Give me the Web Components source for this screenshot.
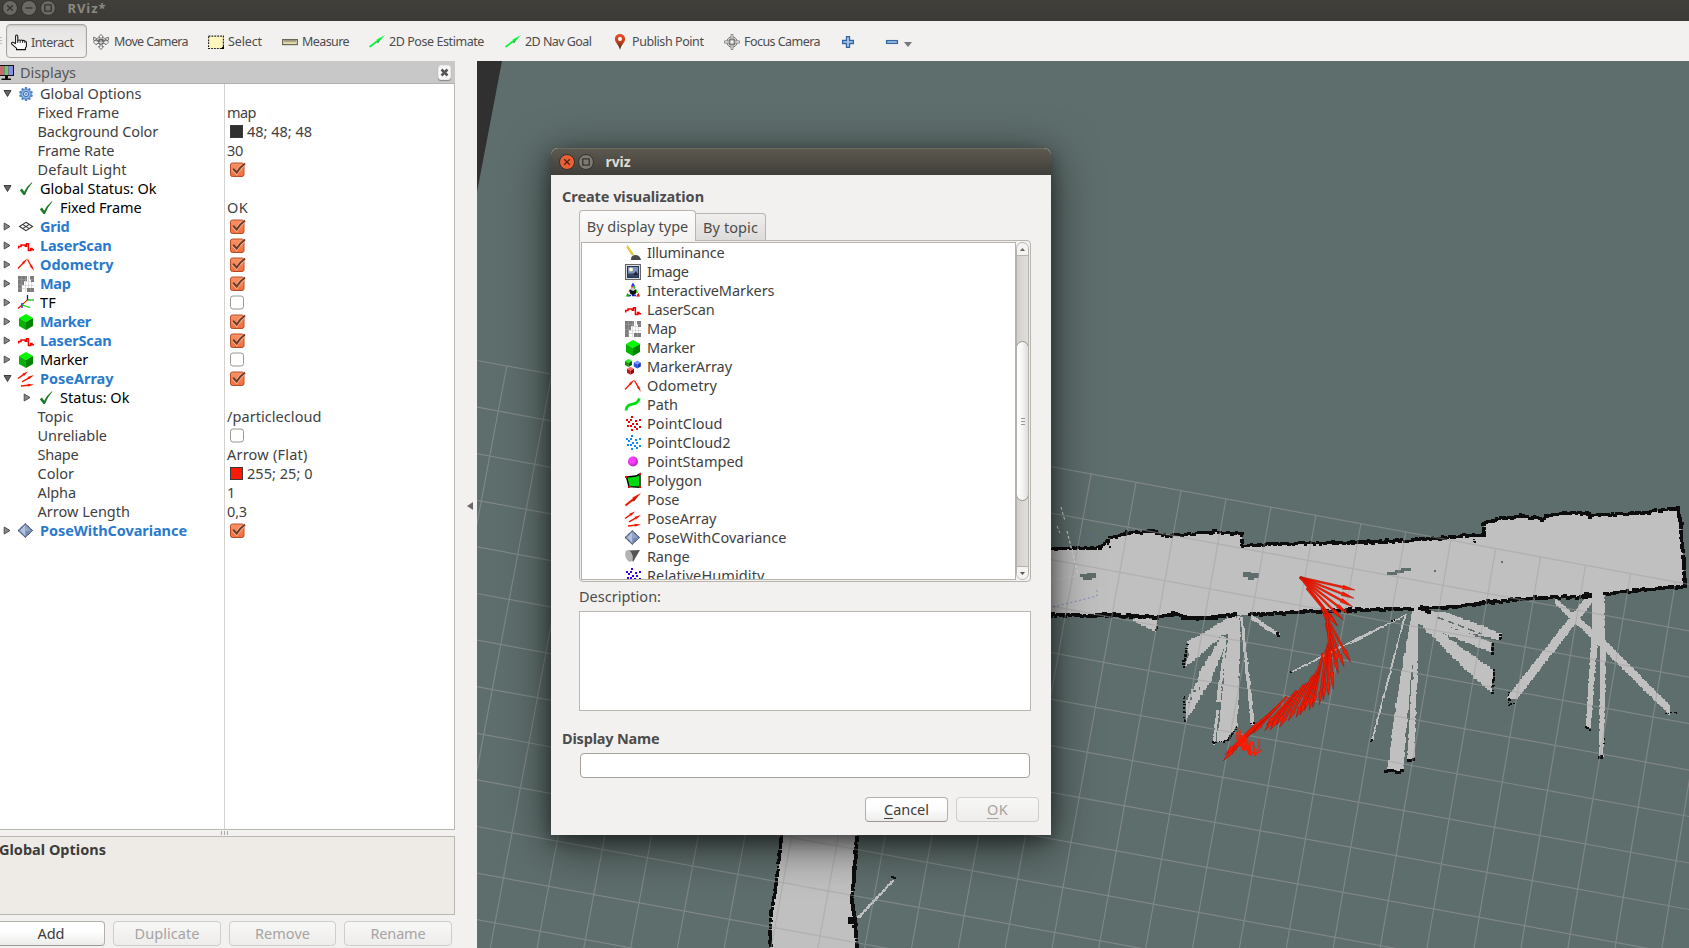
<!DOCTYPE html>
<html lang="en">
<head>
<meta charset="utf-8">
<title>RViz</title>
<style>
html,body{margin:0;width:100%;height:100%;overflow:hidden;background:#f2f1f0}
body{font-family:"Noto Sans","Open Sans",sans-serif;font-size:14.5px;color:#4c4c4c}
</style>
</head>
<body>
<rviz-app></rviz-app>
<script>
const define = (name, css, html, init) => {
  const t = document.createElement('template');
  t.innerHTML = `<style>*{box-sizing:border-box}${css}</style>${html}`;
  customElements.define(name, class extends HTMLElement {
    connectedCallback() {
      if (this.shadowRoot) return;
      const r = this.attachShadow({mode: 'open'});
      const c = t.content.cloneNode(true);
      if (init) init.call(this, c);
      r.appendChild(c);
    }
  });
};

/* ---------- icons, 16 x 16 grid ---------- */
const arrow = (x1, y1, x2, y2, w, c) => {
  const d = Math.hypot(x2 - x1, y2 - y1), ux = (x2 - x1) / d, uy = (y2 - y1) / d, px = -uy, py = ux;
  const at = (t, o) => `${(x1 + ux * d * t + px * o).toFixed(2)},${(y1 + uy * d * t + py * o).toFixed(2)}`;
  return `<polygon fill="${c}" points="${at(0, w * .5)} ${at(.55, w * .5)} ${at(.5, w)} ${at(1, 0)} ${at(.5, -w)} ${at(.55, -w * .5)} ${at(0, -w * .5)}"/>`;
};
const cube = (x, y, s, a, b, c) => `<g transform="translate(${x} ${y}) scale(${s})"><path d="M7 0 14 4 7 8 0 4Z" fill="${a}"/><path d="M0 4 7 8V16L0 12Z" fill="${b}"/><path d="M14 4 7 8V16L14 12Z" fill="${c}"/></g>`;
const dots = c => `<g fill="${c}" shape-rendering="crispEdges">${[[6,0],[1,3],[5,3],[10,4],[14,3],[3,5],[7,7],[11,7],[2,9],[5,9],[9,10],[14,10],[6,13],[11,12]].map(p => `<rect x="${p[0]}" y="${p[1]}" width="2" height="2"/>`).join('')}</g>`;
const gearTeeth = Array.from({length: 10}, (_, i) => `<rect x="6.8" y="1.1" width="2.4" height="3" rx=".6" transform="rotate(${i * 36} 8 8)"/>`).join('');
const ICONS = {
  hand: '<path d="M4.600 9.500V2.600Q4.600 1 5.700 1 6.800 1 6.800 2.600V6.500Q8 5.400 9.200 6.400 10.600 5.600 11.600 6.700 13 6 13.800 7 15.400 7 15.400 8.600V12.500L14.400 14V15.600H5.500V14.200L.8 10.200Q0 8.500 1.600 8.300 3 8.200 4.600 10" fill="#fff" stroke="#111" stroke-width="1.050"/><path d="M6.800 6.500V9M9.200 6.600V9M11.600 6.900V9M13.800 7.200V9" stroke="#111" stroke-width=".9" fill="none"/>',
  move: '<g fill="#f5f5f5" stroke="#555" stroke-width=".8"><path d="M8 .4 10.600 3.400H9V6.600H12L12.600 5 15.600 8 12.600 11 12 9.400H9V12.600H10.600L8 15.600 5.400 12.600H7V9.400H4L3.400 11 .4 8 3.400 5 4 6.600H7V3.400H5.400Z"/><path d="M.6 3.200 4 4.600 8 6 12 4.600 15.400 3.200V6.200L12 7 8 8 4 7 .6 6.200Z" fill="none"/><circle cx="8" cy="8" r="2.400" fill="none"/></g>',
  select: '<rect x=".6" y="2.100" width="14.800" height="12.400" fill="#fff7bb" stroke="#222" stroke-width="1.200" stroke-dasharray="1.800 1.100"/><path d="M16 11.500V15H12.500Z" fill="#000"/>',
  measure: '<rect x=".6" y="5.600" width="14.800" height="5" fill="#e6dcae" stroke="#6c6858" stroke-width="1.200"/><path d="M3 6V8.200M5 6V8.200M7 6V8.200M9 6V8.200M11 6V8.200M13 6V8.200" stroke="#555" stroke-width=".8"/>',
  green: arrow(.6, 13, 15.800, 1.200, 1.800, '#0bf43a') + '<path d="M7.500 9 10.500 6.300 9.800 8.600Z" fill="#128a2a"/>',
  pin: '<defs><linearGradient id="p" x1="0" y1="0" x2="0" y2="1"><stop offset="0" stop-color="#e8502a"/><stop offset=".45" stop-color="#c4441f"/><stop offset="1" stop-color="#3a2a18"/></linearGradient></defs><path d="M8 0C4.600 0 2.900 2.500 2.900 5.100 2.900 8.600 6.600 10.500 8 16 9.400 10.500 13.100 8.600 13.100 5.100 13.100 2.500 11.400 0 8 0Z" fill="url(#p)"/><circle cx="8" cy="5" r="2" fill="#fff"/>',
  focus: '<g fill="none" stroke="#777" stroke-width="1"><circle cx="8" cy="8" r="5.200"/><circle cx="8" cy="8" r="3"/><path d="M7 .5H9V6.900H15.500V9.100H9V15.500H7V9.100H.5V6.900H7Z" fill="#eee" stroke-width=".8"/><path d="M5 5.300H11M5 10.700H11M5.300 5V11M10.700 5V11"/></g>',
  plus: '<path d="M6.500 2.600H9.500V6.500H13.400V9.500H9.500V13.400H6.500V9.500H2.600V6.500H6.500Z" fill="#aecbea" stroke="#3465a4" stroke-width="1.300"/>',
  minus: '<rect x="2.600" y="6.600" width="10.800" height="2.800" fill="#aecbea" stroke="#3465a4" stroke-width="1.300"/>',
  monitor: '<rect x="-1" y="1" width="15" height="11" fill="#111"/><rect x="0" y="2" width="4.300" height="9" fill="#c66a6a"/><rect x="4.300" y="2" width="4.300" height="9" fill="#74c27a"/><rect x="8.600" y="2" width="4.400" height="9" fill="#8a8ae6"/><path d="M5 12H8V14.500H11V16H1.500V14.500H5Z" fill="#111"/>',
  gear: `<g fill="#4f84c4">${gearTeeth}<circle cx="8" cy="8" r="5.500"/></g><circle cx="8" cy="8" r="4.500" fill="#8fb5e2"/><circle cx="8" cy="8" r="2.600" fill="#c9dcf2" stroke="#3c6fb0" stroke-width="1"/><circle cx="8" cy="8" r="1" fill="#4f84c4"/>`,
  ok: '<path d="M1.800 9.200 4 7.600 6.200 10.800Q9 5 13.800 1.200L14.300 1.800Q9.500 7 7 14H5.500Z" fill="#1e7a28"/>',
  grid: '<g fill="none" stroke="#333" stroke-width="1.100"><path d="M8 3.300 14.500 7.500 8 11.700 1.500 7.500Z"/><path d="M4.700 5.400 11.300 9.600M11.300 5.400 4.700 9.600"/></g>',
  laser: '<path d="M.7 10.500V8.400H3V7H7.300V8.200H8.500V5.800H10.400V12.600H12.600V10.400H14V11.800H16" fill="none" stroke="#f80000" stroke-width="1.500"/>',
  odom: arrow(0, 11.500, 9.500, 1.500, 1.300, '#f01800') + arrow(9.500, 2.500, 16, 14, 1.300, '#f01800'),
  map: '<g shape-rendering="crispEdges"><rect width="16" height="16" fill="#fff"/><path d="M4 5H16M4 9H16M4 12H16M7 5V16M10 0V16M13 5V13" stroke="#ddd" fill="none"/><path d="M0 0H9V5H6V9H4V16H0ZM12 0H16V6H13ZM9 12H16V16H9Z" fill="#7c7c7c"/><path d="M3.500 0V16M7.500 0V5M0 3.500H9M0 8H5M0 12H4M12 3H16M12 12V16" stroke="#989898" stroke-width=".7" fill="none"/></g>',
  tf: '<g fill="none" stroke-width="1.300"><path d="M10 5H16" stroke="#0c0"/><path d="M9.500 5V0" stroke="#11d"/><path d="M9.500 5 4 10" stroke="#d11" stroke-dasharray="3 .5"/><path d="M4 8V13" stroke="#11d"/><path d="M4 10 0 13.500" stroke="#d11"/><path d="M4 10 12 12.500" stroke="#0c0"/><path d="M6 9 9 6" stroke="#dd2" stroke-width=".8"/></g>',
  marker: cube(1, 0, 1, '#00f800', '#00b400', '#008400'),
  markers: cube(0, 0, .5, '#2e2', '#090', '#060') + cube(8.800, 1.600, .5, '#7a9cff', '#2a52dd', '#1a37a8') + cube(2, 7.800, .5, '#f66', '#c01818', '#900'),
  path: '<path d="M1 13.500C1.500 6 8 8 11 6 13 5 13.500 3 14.500 1.500" fill="none" stroke="#00dc14" stroke-width="2.800"/>',
  pcr: dots('#f00000'), pcb: dots('#0c8cff'), pcv: dots('#3a00f0'),
  point: '<defs><radialGradient id="r" cx=".4" cy=".4"><stop offset=".5" stop-color="#ff3cff"/><stop offset="1" stop-color="#c02cc8"/></radialGradient></defs><circle cx="8" cy="7.500" r="5" fill="url(#r)"/>',
  polygon: '<path d="M1.500 4 11 3 15 .8V14.200L4 13.600Z" fill="#00d810" stroke="#000" stroke-width="1.400"/><path d="M0 3H2V5H0ZM14 0H16V2H14ZM14 13H16V15H14ZM3 13H5V15H3Z" fill="#f00"/>',
  pose: arrow(.5, 13.500, 16, 1, 2, '#f01800') + '<path d="M7 9.500 11 5.500 9.500 9Z" fill="#9a1408"/>',
  posearray: arrow(0, 7.500, 10, .5, 1.500, '#f01800') + arrow(4, 10.800, 16, 4, 1.500, '#f01800') + arrow(3, 15, 16, 13.500, 1.500, '#f01800'),
  cov: '<path d="M7.300 .6 14.600 7.500 7.300 14.400 0 7.500Z" fill="#7389b3" stroke="#2b3a5c" stroke-width="1" stroke-dasharray="1.400 .5"/><path d="M7.300 2V13L2 7.500Z" fill="#b4c2dc"/><path d="M7.300 2 12.500 7.500 7.300 8.500Z" fill="#93a6c8"/>',
  range: '<path d="M3 1.500 15 1 8 13Z" fill="#555"/><ellipse cx="4" cy="7" rx="3.600" ry="6" transform="rotate(-18 4 7)" fill="#b4b4b4"/>',
  illum: '<path d="M2.500 .5 8.500 9.500 7 10 2 2.500Z" fill="#ffd820" stroke="#c9a200" stroke-width=".6"/><path d="M6 15Q5.500 10 11 10 15 10.300 16 15Z" fill="#4a4a4a"/>',
  image: '<rect x=".6" y=".6" width="14.800" height="14.800" fill="#fff" stroke="#666" stroke-width="1.200"/><rect x="2.500" y="2.500" width="11" height="11" fill="#7b93b8" stroke="#223354" stroke-width="1"/><rect x="3" y="9.500" width="10" height="3.500" fill="#364866"/><circle cx="6" cy="5.600" r="2" fill="#fffbd0"/><path d="M8 11 11 7 13 11Z" fill="#223"/>',
  imark: '<g fill="none" stroke-width="1.600"><path d="M8 2 2.500 12" stroke="#e22" stroke-dasharray="3 2"/><path d="M8 2 13.500 12" stroke="#2b2" stroke-dasharray="4 1"/><path d="M2 12.500H14" stroke="#22e" stroke-dasharray="4 1"/></g><path d="M8 -.5 10 3H6Z" fill="#33e"/><path d="M1 13.500H5L2.500 10Z" fill="#0b0"/><path d="M15 13.500H11L13.500 10Z" fill="#e11"/><path d="M8 4.500 11 6.500V10.500L8 12.500 5 10.500V6.500Z" fill="#111"/><path d="M8 4.500 11 6.500 8 8 5 6.500Z" fill="#ccc"/>',
  on: '<defs><linearGradient id="o" x1="0" y1="0" x2="0" y2="1"><stop offset="0" stop-color="#fb9468"/><stop offset="1" stop-color="#ee6d3c"/></linearGradient></defs><rect x=".5" y="1" width="13.500" height="13.500" rx="2" fill="url(#o)" stroke="#b54e27"/><path d="M3.200 7.100 6.600 10.800Q9.500 5.500 14.600 2.300" fill="none" stroke="#f9b79a" stroke-width="3.400"/><path d="M3.200 6.700 6.700 10.500Q9.500 5.500 15 1.500" fill="none" stroke="#6e3a26" stroke-width="2"/>',
  off: '<rect x=".5" y="1" width="13" height="13" rx="2.500" fill="#fff" stroke="#9b9892"/>',
  open: '<path d="M4 4.500H11L7.500 10.500Z" fill="#666" stroke="#333" stroke-width=".9"/>',
  shut: '<path d="M4.200 4V11L10 7.500Z" fill="#888" stroke="#444" stroke-width=".9"/>'
};
define('rv-icon', ':host{display:block;width:16px;height:16px;flex:none}svg{display:block;overflow:visible}', '<svg width="16" height="16" viewBox="0 0 16 16"></svg>', function (c) {
  c.querySelector('svg').innerHTML = ICONS[this.getAttribute('name')] || '';
});

/* A single line of text set to a fixed advance width. */
customElements.define('ui-text', class extends HTMLElement {
  connectedCallback() {
    if (this.shadowRoot) return;
    this.attachShadow({mode: 'open'}).innerHTML = '<style>:host{display:inline-block;white-space:pre;flex:none}::slotted(u){text-underline-offset:3px;text-decoration-thickness:1px}</style><slot></slot>';
    const w = +this.getAttribute('w'), n = this.textContent.length;
    if (w && n > 1) {
      const d = (w - this.getBoundingClientRect().width) / n;
      this.style.letterSpacing = Math.max(-1.2, Math.min(1.2, d)).toFixed(3) + 'px';
    }
  }
});
const T = (s, w) => `<ui-text w="${w}">${s}</ui-text>`;

/* ---------- window chrome ---------- */
define('window-button', `:host{display:block;width:16px;height:16px;flex:none}
svg{display:block}`, '<svg width="16" height="16" viewBox="0 0 16 16"><circle cx="8" cy="8" r="7.500"/><path fill="none"/></svg>', function (c) {
  const k = this.getAttribute('kind'), live = this.hasAttribute('live');
  const ci = c.querySelector('circle'), p = c.querySelector('path');
  ci.setAttribute('fill', live ? (k === 'close' ? '#ec6034' : '#7c7a72') : '#6b6963');
  ci.setAttribute('stroke', '#33322e');
  p.setAttribute('stroke', live && k === 'close' ? '#4e2012' : '#35342f');
  p.setAttribute('stroke-width', '1.300');
  p.setAttribute('d', {close: 'M5.200 5.200 10.800 10.800M10.800 5.200 5.200 10.800', min: 'M4.500 8H11.500', max: 'M4.800 4.800H11.200V11.200H4.800Z'}[k]);
});
define('main-title', `:host{display:flex;height:21px;background:linear-gradient(#403f3a,#3c3b37);align-items:flex-start;padding:0 0 0 1.500px;color:#8b887e;font:bold 13px/16px "Noto Sans",sans-serif}
window-button{margin-right:3px}ui-text{margin-left:9px}`,
`<window-button kind="close"></window-button><window-button kind="min"></window-button><window-button kind="max"></window-button>${T('RViz*', 39)}`);

define('tool-button', `:host{display:flex;flex:none;align-items:center;gap:5px;height:34px;padding-top:1px}
:host([active]){border:1px solid #a9a6a0;border-radius:4px;background:linear-gradient(#e4e3e1,#f2f1f0);box-shadow:inset 0 1px 2px #0002;padding:2px 0 0 4px;gap:4px}`, '<slot></slot>');
define('rv-toolbar', `:host{display:flex;height:40px;align-items:flex-start;padding-top:3px;background:#f2f1f0;font-size:12.500px;color:#4c4c4c}
.grip{width:2px;height:9px;margin:13px 4px 0 0;background:repeating-linear-gradient(#bbb 0 1px,transparent 1px 3px)}
.dd{margin:18px 0 0 4px;border:4px solid transparent;border-top:5px solid #777;height:0}`,
`<span class="grip"></span>
<tool-button active style="width:81px;margin-right:6px"><rv-icon name="hand"></rv-icon>${T('Interact', 42.5)}</tool-button>
<tool-button style="width:115px"><rv-icon name="move"></rv-icon>${T('Move Camera', 74)}</tool-button>
<tool-button style="width:74px;gap:4px"><rv-icon name="select"></rv-icon>${T('Select', 34)}</tool-button>
<tool-button style="width:87px;gap:4px"><rv-icon name="measure"></rv-icon>${T('Measure', 47)}</tool-button>
<tool-button style="width:136px;gap:4px"><rv-icon name="green"></rv-icon>${T('2D Pose Estimate', 95)}</tool-button>
<tool-button style="width:107px;gap:4px"><rv-icon name="green"></rv-icon>${T('2D Nav Goal', 66.5)}</tool-button>
<tool-button style="width:112px;gap:4px"><rv-icon name="pin"></rv-icon>${T('Publish Point', 71.5)}</tool-button>
<tool-button style="width:116px;gap:4px"><rv-icon name="focus"></rv-icon>${T('Focus Camera', 76)}</tool-button>
<tool-button style="width:44px"><rv-icon name="plus"></rv-icon></tool-button>
<tool-button><rv-icon name="minus"></rv-icon></tool-button><span class="dd"></span>`);

/* ---------- displays panel ---------- */
define('push-button', `:host{display:flex;flex:none;height:25px;align-items:center;justify-content:center;border:1px solid #b3b0a9;border-bottom-color:#9d9a94;border-radius:4px;background:linear-gradient(#fff,#fdfdfd 45%,#ececeb);color:#3c3c3c;padding-bottom:1px}
:host([disabled]){color:#a6a4a1;border-color:#cfcdc9;background:linear-gradient(#f7f7f6,#eeedec)}`, '<slot></slot>');

/* depth, arrow, icon, style, label, width, value, value width, swatch */
const ROWS = [
  [0, 'open', 'gear', '', 'Global Options', 101.5],
  [2, '', '', '', 'Fixed Frame', 81.5, 'map', 29],
  [2, '', '', '', 'Background Color', 120.5, '48; 48; 48', 65, '#303030'],
  [2, '', '', '', 'Frame Rate', 77, '30', 16],
  [2, '', '', '', 'Default Light', 89, '+'],
  [0, 'open', 'ok', 'k', 'Global Status: Ok', 116.5],
  [1, '', 'ok', 'k', 'Fixed Frame', 81.5, 'OK', 21],
  [0, 'shut', 'grid', 'b', 'Grid', 29.5, '+'],
  [0, 'shut', 'laser', 'b', 'LaserScan', 71.5, '+'],
  [0, 'shut', 'odom', 'b', 'Odometry', 73.5, '+'],
  [0, 'shut', 'map', 'b', 'Map', 30.5, '+'],
  [0, 'shut', 'tf', 'k', 'TF', 16, '-'],
  [0, 'shut', 'marker', 'b', 'Marker', 51, '+'],
  [0, 'shut', 'laser', 'b', 'LaserScan', 71.5, '+'],
  [0, 'shut', 'marker', 'k', 'Marker', 48, '-'],
  [0, 'open', 'posearray', 'b', 'PoseArray', 73.5, '+'],
  [1, 'shut', 'ok', 'k', 'Status: Ok', 69.5],
  [2, '', '', '', 'Topic', 36, '/particlecloud', 94.5],
  [2, '', '', '', 'Unreliable', 69.5, '-'],
  [2, '', '', '', 'Shape', 41, 'Arrow (Flat)', 80.5],
  [2, '', '', '', 'Color', 36.5, '255; 25; 0', 65.5, '#ff1900'],
  [2, '', '', '', 'Alpha', 38.5, '1', 0],
  [2, '', '', '', 'Arrow Length', 92.5, '0,3', 20],
  [0, 'shut', 'cov', 'b', 'PoseWithCovariance', 147, '+']
];
define('display-tree', `:host{display:block;flex:1;background:linear-gradient(90deg,#fff 224px,#d4d3d1 224px,#d4d3d1 225px,#fff 225px);border-right:1px solid #b9b7b2;border-bottom:1px solid #b9b7b2;color:#3f3f3f;line-height:19px}
.row{display:grid;grid-template-columns:225px 1fr;height:19px}
.n,.v{display:flex;align-items:center}
.d1{padding-left:20px}.d2{padding-left:37.500px}
.n rv-icon:first-child,.n i{width:16px;margin-right:1.500px}.n rv-icon+rv-icon,.n i+rv-icon{margin-right:6.500px}
.b{color:#2a7acc;font-weight:bold}.k{color:#000}
.v{padding-left:2px}.v rv-icon{margin-left:3px}
.sw{width:13px;height:13px;border:1px solid #3a3a3a;margin:0 4px 0 3px}`, '<div id="l"></div>', function (c) {
  c.querySelector('#l').innerHTML = ROWS.map(([d, a, ic, st, lab, w, v, vw, sw]) =>
    `<div class="row"><div class="n d${d} ${st}">${d < 2 ? (a ? `<rv-icon name="${a}"></rv-icon>` : '<i></i>') + `<rv-icon name="${ic}"></rv-icon>` : ''}${T(lab, w)}</div><div class="v">${v === '+' ? '<rv-icon name="on"></rv-icon>' : v === '-' ? '<rv-icon name="off"></rv-icon>' : v ? (sw ? `<span class="sw" style="background:${sw}"></span>` : '') + T(v, vw) : ''}</div></div>`).join('');
});
define('displays-panel', `:host{display:flex;flex-direction:column;width:455px;flex:none}
header{display:flex;height:23px;background:#c8c8c8;border-bottom:1px solid #b4b2ae;align-items:center;color:#555}
header ui-text{margin-left:4px}header b{flex:1}
.x{width:13px;height:15px;border-radius:3px;background:#f8f8f7;border:1px solid #e8e8e8;box-shadow:0 1px 1px #0005;margin-right:4px}
.x svg{display:block}
.grip{height:6px;display:flex;justify-content:center;align-items:center;gap:2px;padding-right:6px}
.grip i{width:1px;height:4px;background:#aaa}
.desc{height:79px;border:1px solid #b9b7ae;border-left:0;background:#eeebe6;font-weight:bold;color:#3c3c3c;padding-top:2px}
.desc ui-text{margin-left:-1px}
nav{display:flex;height:33px;padding:6px 0 0;color:#444}
nav push-button+push-button{margin-left:8px}`,
`<header><rv-icon name="monitor"></rv-icon>${T('Displays', 56)}<b></b><span class="x"><svg width="11" height="13" viewBox="0 0 11 13"><path d="M2.500 3.500 8.500 9.500M8.500 3.500 2.500 9.500" stroke="#555" stroke-width="2.600"/></svg></span></header>
<display-tree></display-tree>
<div class="grip"><i></i><i></i><i></i></div>
<div class="desc">${T('Global Options', 107)}</div>
<nav><push-button style="width:108px;margin-left:-3px">${T('Add', 27)}</push-button><push-button disabled style="width:108px">${T('Duplicate', 65)}</push-button><push-button disabled style="width:107px">${T('Remove', 55)}</push-button><push-button disabled style="width:108px">${T('Rename', 55)}</push-button></nav>`);

/* ---------- 3D view ---------- */
let seed = 7;
const rnd = () => (seed = (seed * 16807) % 2147483647) / 2147483647;
const A = (x, y) => [1040 + x / 3, 480 + y / 3];
const B = (x, y) => [1350 + x / 3, 480 + y / 3];
const pts = l => l.map(p => p.map(n => n.toFixed(1)).join()).join(' ');
const wall = (l, t = 3) => {
  let d = '';
  for (let i = 1; i < l.length; i++) {
    const [x1, y1] = l[i - 1], [x2, y2] = l[i], n = Math.max(1, Math.round(Math.hypot(x2 - x1, y2 - y1) / 2.4));
    for (let k = 0; k <= n; k++) {
      const w = Math.round(t - .4 + rnd() * 1.8), h = Math.round(t - .9 + rnd() * 1.6);
      d += `M${Math.round(x1 + (x2 - x1) * k / n - w / 2 + rnd() - .5)} ${Math.round(y1 + (y2 - y1) * k / n - h / 2 + rnd() * 2.2 - 1.1)}h${w}v${h}h${-w}z`;
    }
  }
  return `<path d="${d}" fill="#0d0d0d"/>`;
};
/* known-free area whose outline follows the cells of the map */
const cells = (l, fill = '#c0c0c0') => {
  let d = '';
  l.forEach(([x1, y1], i) => {
    const [x2, y2] = l[(i + 1) % l.length], n = Math.max(1, Math.round(Math.hypot(x2 - x1, y2 - y1) / 3));
    for (let k = 0; k < n; k++) {
      const x = Math.round(x1 + (x2 - x1) * k / n + (rnd() - .5) * 1.6), y = Math.round(y1 + (y2 - y1) * k / n + (rnd() - .5) * 1.6);
      d += d ? `H${x}V${y}` : `M${x} ${y}`;
    }
  });
  return `<path d="${d}Z" fill="${fill}"/>`;
};
/* thin free-space beam with a stepped, sensor-like edge */
const beam = (x1, y1, x2, y2, w1, w2) => {
  const L = Math.hypot(x2 - x1, y2 - y1), n = Math.ceil(L / 2);
  let d = '';
  const vert = Math.abs(y2 - y1) > Math.abs(x2 - x1);
  for (let k = 0; k <= n; k++) {
    const t = k / n, w = w1 + (w2 - w1) * t + (rnd() - .3) * 1.6, x = x1 + (x2 - x1) * t, y = y1 + (y2 - y1) * t;
    const r = Math.max(1, Math.round(w));
    d += vert ? `M${Math.round(x - w / 2)} ${Math.round(y)}h${r}v2h${-r}z` : `M${Math.round(x)} ${Math.round(y - w / 2)}v${r}h2v${-r}z`;
  }
  return `<path d="${d}" fill="#c0c0c0"/>`;
};
function scene() {
  let s = '';
  const topA = [[33,205],[180,203],[215,170],[260,160],[340,153],[380,168],[440,165],[520,155],[605,162],[607,197],[690,192],[1020,186]].map(p => A(...p));
  const topB = [[0,188],[220,178],[400,163],[402,130],[440,117],[520,108],[575,118],[600,103],[710,99],[720,108],[860,100],[985,85],[992,130],[1000,240],[1005,318]].map(p => B(...p));
  const b1 = [[1005,318],[860,332],[765,344]].map(p => B(...p));
  const b2 = [[722,352],[560,353],[400,368],[330,380],[210,386]].map(p => B(...p));
  const b3 = [B(185, 386), B(0, 390), A(840, 395), A(690, 400), A(628, 404)];
  const b4 = [[585,404],[520,412],[450,415],[400,402],[350,412],[215,406],[33,406]].map(p => A(...p));
  s += `<polygon points="477,61 502,61 477,192" fill="#303030" shape-rendering="auto"/>`;
  s += `<polygon fill="#c0c0c0" points="${pts([...topA, ...topB, ...b1, ...b2, ...b3, ...b4])}"/>`;
  /* first doorway */
  s += cells([A(585,400),A(540,430),A(440,490),A(446,530),A(436,560),A(545,466),A(600,455)]);
  s += cells([A(542,468),A(565,480),A(515,600),A(440,722),A(436,668),A(480,575)]);
  s += cells([A(566,420),A(600,405),A(600,480),A(598,560),A(592,740),A(560,785),A(530,788),A(545,640),A(562,480)]);
  s += beam(...A(556, 490), ...A(535, 660), 2, 4) + beam(...A(533, 690), ...A(521, 790), 2, 2) + beam(...A(605, 410), ...A(638, 728), 2, 4) + beam(...A(632, 412), ...A(715, 466), 5, 3);
  s += cells([A(270,415),A(354,415),A(350,455)]) + wall([A(354, 412), A(349, 452)], 1.3);
  s += `<path d="M1196 680h2v2h-2zM1199 687h1v3h-1zM1193 690h3v2h-3zM1190 697h2v3h-2zM1188 702h2v1h-2z" fill="#5e6e6c"/>`;
  s += wall([A(442, 497), A(430, 560)], 2) + wall([A(432, 650), A(434, 724)], 1.500) + wall([A(530, 790), A(565, 780), A(590, 740)], 1.500) + wall([A(712, 462), A(716, 472)], 2) + wall([A(635, 730), A(644, 731)], 2) + wall([A(518, 790), A(521, 790)], 1.500);
  /* second doorway */
  s += beam(...B(165, 405), ...B(0, 490), 1.300, 1.300) + beam(...A(1020, 440), ...A(755, 575), 1.300, 1.600);
  s += beam(...B(165, 405), ...B(66, 780), 1.300, 1.600);
  s += cells([B(187,388),B(206,388),B(203,470),B(182,600),B(160,870),B(112,870),B(140,650)]);
  s += beam(...B(198, 400), ...B(196, 620), 4, 4) + beam(...B(193, 600), ...B(182, 838), 5, 7);
  s += cells([B(200,390),B(280,395),B(400,440),B(455,465),B(448,480),B(270,435),B(340,455),B(425,490),B(424,516),B(265,452),B(340,510),B(428,570),B(426,636),B(350,570),B(205,425)]);
  s += `<path d="M${B(262,412)}L${B(395,462)}" fill="none" stroke="#5e6e6c" stroke-width="1.500" stroke-dasharray="7 4"/>`;
  s += wall([B(452, 467), B(450, 480)], 2) + wall([B(430, 490), B(427, 518)], 2) + wall([B(432, 572), B(427, 636)], 2) + wall([B(110, 873), B(155, 875)], 3) + wall([B(172, 842), B(190, 838)], 2.500) + wall([B(64, 782), B(67, 783)], 1.500) + wall([B(128, 423), B(133, 423)], 1.500) + wall([A(752, 576), A(754, 576)], 1.500);
  /* third doorway */
  s += beam(...B(722, 350), ...B(487, 650), 10, 11) + beam(...B(615, 365), ...B(745, 480), 5, 11) + beam(...B(745, 480), ...B(955, 690), 11, 9);
  s += beam(...B(745, 345), ...B(745, 480), 12, 13) + beam(...B(733, 480), ...B(715, 738), 6, 5) + beam(...B(760, 480), ...B(754, 825), 6, 4);
  s += wall([B(478, 640), B(478, 674), B(490, 672)], 1.500) + wall([B(708, 740), B(720, 752)], 2) + wall([B(750, 828), B(756, 829)], 3) + wall([B(950, 698), B(980, 698)], 1.500) + wall([B(762, 780), B(763, 790)], 1.500);
  /* gaps in the floor */
  s += `<path fill="#5e6e6c" d="M1080 574h7v-1h9v5h-4v2h-9v-3h-3zM1243 572h8v1h8v5h-5v2h-6v-3h-5zM1387 572h8v-2h6v-2h10v3h-7v2h-7v2h-10zM1434 570h2v2h-2zM1501 561h2v2h-2z"/>`;
  /* lower corridor */
  const l1 = [[783,820],[779,862],[776,885],[771,915],[770,950]], r1 = [[858,820],[855,862],[852,900],[855,922],[857,950]];
  s += `<polygon fill="#c0c0c0" points="${pts([...l1, ...[...r1].reverse()])}"/>` + beam(859, 916, 893, 880, 3, 2) + wall(l1, 2.800) + wall(r1, 3.200) + `<path d="M848 917h9v7h-9z" fill="#0d0d0d"/>` + wall([[893, 878], [894, 879]], 2);
  /* corridor walls */
  s += wall(topA, 3) + wall(topB, 3.300) + wall(b1, 3.300) + wall(b2, 3.300) + wall(b3, 3.300) + wall(b4, 3.600) + wall([A(200, 180), A(210, 200)], 2) + wall([B(372, 168), B(374, 188)], 1.500) + wall([B(215, 380), B(235, 398)], 3) + wall([B(702, 345), B(722, 345)], 4) + wall([A(430, 412), A(480, 415)], 4);
  /* ground grid */
  let g = '';
  for (let k = 0; k < 13; k++) g += `M477 ${(360.5 + 46.6 * k).toFixed(1)}L1689 ${(584.3 + 46.45 * k).toFixed(1)}`;
  for (let j = -14; j < 20; j++) {
    const x0 = 1136 + 44.95 * j, y0 = 482.7 + 8.3 * j, x1 = 1082.3 + 46.7 * j, m = (x1 - x0) / (780 - y0);
    g += `M${x0.toFixed(1)} ${y0.toFixed(1)}L${(x0 + m * (948 - y0)).toFixed(1)} 948`;
  }
  s += `<path d="${g}" stroke="#a0a0a4" stroke-opacity=".5" stroke-width="1.200" fill="none" shape-rendering="auto"/>`;
  /* laser traces */
  s += `<g fill="none" shape-rendering="auto" stroke-dasharray="3 2"><path d="M1061 507 1065 521M1057 526 1060 533M1067 531 1078 575" stroke="#d8dcdc" stroke-width="1"/><path d="M1053 580 1075 576" stroke="#ddd" stroke-dasharray="1 3"/><path d="M1053 607 1097 596V590M1087 534q6 2 5 8M1085 544l1 4M1052 420 1065 431" stroke="#5068c8" stroke-opacity=".6" stroke-dasharray="2 2.500"/></g>`;
  /* pose arrows */
  const ar = [[780,292,945,330],[780,292,942,355],[781,293,938,380],[781,293,925,402],[782,294,910,420],[783,294,892,437],[800,325,892,437],[845,385,932,547],[852,400,912,560],[858,430,895,580],[862,440,893,545],[860,400,880,628],[864,490,865,645],[862,500,850,660],[858,510,838,674],[848,520,818,682],[843,540,808,690],[838,560,793,692],[830,575,780,705],[824,585,768,712],[818,588,745,722],[800,610,718,742],[790,615,710,735],[770,632,690,750],[768,634,674,752],[760,645,680,735],[740,650,640,760],[720,672,610,775],[705,688,590,800],[690,700,572,815],[680,708,560,830],[665,720,550,842],[650,730,555,825]];
  const arr = ar.map(([a, b, c, d]) => {
    const [x1, y1] = A(a, b), [x2, y2] = A(c, d), L = Math.hypot(x2 - x1, y2 - y1), ux = (x2 - x1) / L, uy = (y2 - y1) / L;
    const q = (t, o) => [x1 + ux * L * t - uy * o, y1 + uy * L * t + ux * o];
    return `<polygon points="${pts([q(0, .9), q(.78, .9), q(.78, 2), q(1, 0), q(.78, -2), q(.78, -.9), q(0, -.9)])}"/>`;
  }).join('');
  s += `<g fill="#ff1900" stroke="#9c1204" stroke-width=".5" shape-rendering="auto">${arr}</g>`;
  let c = '';
  for (let i = 0; i < 15; i++) {
    const x = 1235 + i * 1.200 + rnd() * 3, y = 726 + i * .9 + rnd() * 6;
    c += `M${x.toFixed(1)} ${y.toFixed(1)}l${(rnd() * 3).toFixed(1)} 14m-2 -4l2 4 2 -4`;
  }
  s += `<path d="${c}M1259 739V753M1256 749l3 4 3-4M1247 739l-4 10" fill="none" stroke="#ff1900" stroke-width="1" shape-rendering="auto"/>`;
  return s;
}
define('scene-view', ':host{display:block;flex:1;background:#5e6e6c;overflow:hidden}svg{display:block}', '<svg width="1212" height="887" viewBox="477 61 1212 887" shape-rendering="crispEdges"></svg>', function (c) {
  c.querySelector('svg').innerHTML = scene();
});

/* ---------- dialog ---------- */
const TYPES = [['illum', 'Illuminance', 77.5], ['image', 'Image', 41.5], ['imark', 'InteractiveMarkers', 127.5], ['laser', 'LaserScan', 67.5], ['map', 'Map', 29.5], ['marker', 'Marker', 48], ['markers', 'MarkerArray', 85], ['odom', 'Odometry', 70], ['path', 'Path', 31], ['pcr', 'PointCloud', 75.5], ['pcb', 'PointCloud2', 83.5], ['point', 'PointStamped', 96.5], ['polygon', 'Polygon', 55], ['pose', 'Pose', 32.5], ['posearray', 'PoseArray', 69.5], ['cov', 'PoseWithCovariance', 139.5], ['range', 'Range', 42.5], ['pcv', 'RelativeHumidity', 117.5]];
define('type-list', `:host{display:block;flex:1;background:#fff;border:1px solid #b5b2ac;overflow:hidden;color:#3f3f3f;line-height:19px}
.r{display:flex;height:19px;align-items:center;padding-left:43px;gap:6px}`, '<div id="l"></div>', function (c) {
  c.querySelector('#l').innerHTML = TYPES.map(([i, n, w]) => `<div class="r"><rv-icon name="${i}"></rv-icon>${T(n, w)}</div>`).join('');
});
define('scroll-bar', `:host{display:flex;flex-direction:column;width:13px;border:1px solid #b5b2ac;border-radius:7px;background:linear-gradient(90deg,#d2d0cd,#e0dfdd);overflow:hidden}
.a{height:13px;background:#f4f3f2;display:flex;align-items:center;justify-content:center;flex:none}
.a.u{border-bottom:1px solid #b5b2ac}.a.d{border-top:1px solid #b5b2ac}
.s{height:85px}.t{height:160px;margin:0 -1px;border:1px solid #99968f;border-radius:7px;background:linear-gradient(90deg,#fff,#f4f4f3 50%,#dedddb);display:flex;align-items:center;justify-content:center}
.t i{width:4px;height:7px;background:repeating-linear-gradient(#999 0 1px,transparent 1px 3px)}.f{flex:1}`,
`<span class="a u"><svg width="5" height="3"><path d="M0 3 2.500 0 5 3Z" fill="#666"/></svg></span><span class="s"></span><span class="t"><i></i></span><span class="f"></span><span class="a d"><svg width="5" height="3"><path d="M0 0 2.500 3 5 0Z" fill="#555"/></svg></span>`);
define('tab-item', `:host{display:flex;justify-content:center;align-items:center;height:27px;border:1px solid #b8b5af;border-bottom:0;border-left:0;border-radius:0 4px 0 0;background:linear-gradient(#f0efee,#dddbd9);}
:host([active]){height:31px;border-left:1px solid #b8b5af;border-radius:4px 4px 0 0;background:linear-gradient(#fbfbfb,#f3f2f1);margin-bottom:-1px;padding-bottom:1px}`, '<slot></slot>');
define('rviz-dialog', `:host{display:flex;flex-direction:column;width:500px;height:687px;border-radius:7px 7px 0 0;background:#f2f1f0;box-shadow:0 10px 46px rgba(0,0,0,.62),0 5px 16px rgba(0,0,0,.35);color:#4c4c4c}
header{display:flex;height:27px;flex:none;align-items:center;gap:3px;padding:0 0 1px 7.500px;border-radius:7px 7px 0 0;background:linear-gradient(#5c594f,#3f3e39);border-top:1px solid #6d6a5e;color:#dfdbd2;font:bold 14px "Noto Sans",sans-serif}
header ui-text{margin:-1px 0 0 9px}
main{flex:1;display:flex;flex-direction:column;padding:10px 20px 12px 11px}
.h{font-weight:bold;line-height:22px;height:22px}
.tabs{display:flex;align-items:flex-end;margin:4px 0 0 17px;height:29px;position:relative;z-index:1}
.pane{display:flex;height:342px;margin:0 0 0 17px;width:452px;border:1px solid #b8b5af;border-radius:0 4px 4px 4px;padding:1px;flex:none}
.l{margin:4px 0 0 17px;line-height:20px;height:20px}
.area{height:100px;width:452px;margin:5px 0 0 17px;background:#fff;border:1px solid #b9b7b2;flex:none}
.n{font-weight:bold;line-height:20px;height:20px;margin-top:17px}
.in{height:25px;width:450px;margin:5px 0 0 18px;background:#fff;border:1px solid #a5a29c;border-radius:4px;flex:none}
.b{display:flex;justify-content:flex-end;gap:8px;margin:19px -8px 0 0}
push-button{width:83px}`,
`<header><window-button kind="close" live></window-button><window-button kind="max" live></window-button>${T('rviz', 25)}</header>
<main><div class="h">${T('Create visualization', 142)}</div>
<div class="tabs"><tab-item active style="width:117px">${T('By display type', 101.5)}</tab-item><tab-item style="width:70px">${T('By topic', 55)}</tab-item></div>
<div class="pane"><type-list></type-list><scroll-bar></scroll-bar></div>
<div class="l">${T('Description:', 82)}</div><div class="area"></div>
<div class="n">${T('Display Name', 97.5)}</div><div class="in"></div>
<div class="b"><push-button><ui-text w="45"><u>C</u>ancel</ui-text></push-button><push-button disabled><ui-text w="21"><u>O</u>K</ui-text></push-button></div></main>`);

define('rviz-app', `:host{display:flex;flex-direction:column;width:1689px;height:948px;overflow:hidden;position:relative}
.body{display:flex;flex:1;min-height:0}
.split{width:22px;flex:none;display:flex;align-items:center;padding:3px 0 0 12px}
rviz-dialog{position:absolute;left:551px;top:148px}`,
`<main-title></main-title><rv-toolbar></rv-toolbar>
<div class="body"><displays-panel></displays-panel><div class="split"><svg width="6" height="8"><path d="M6 0V8L0 4Z" fill="#6a6a6a"/></svg></div><scene-view></scene-view></div>
<rviz-dialog></rviz-dialog>`);
</script>
</body>
</html>
